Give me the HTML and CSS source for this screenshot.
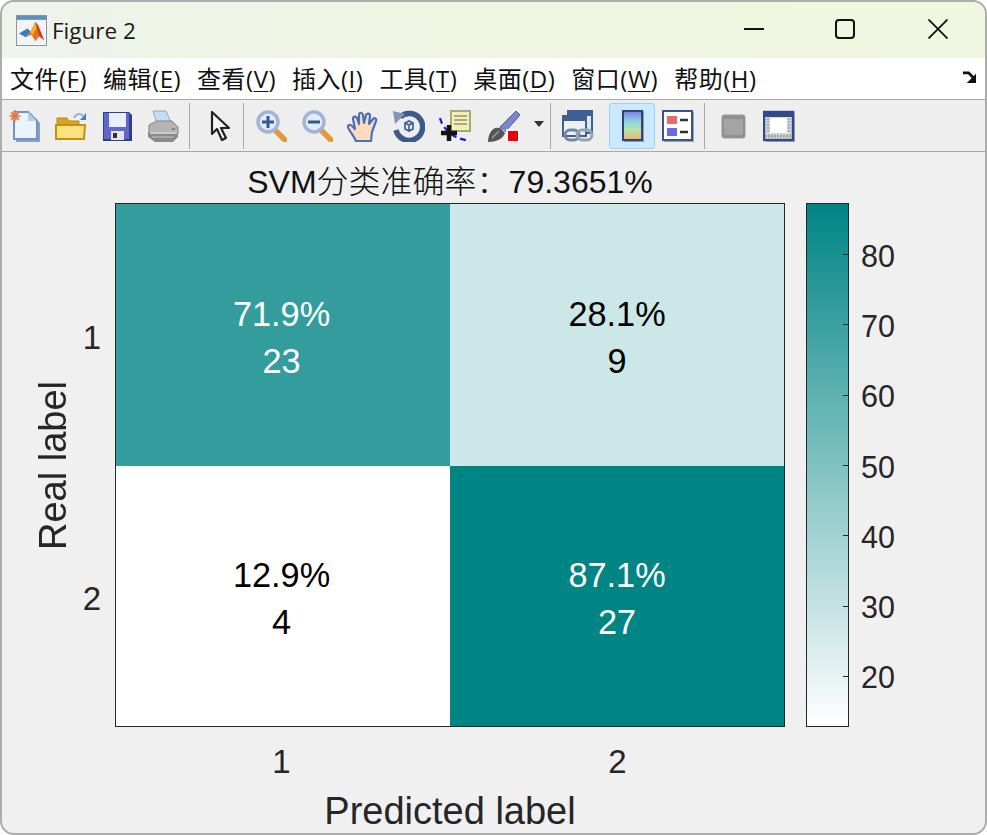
FILE: index.html
```html
<!DOCTYPE html>
<html lang="en">
<head>
  <meta charset="UTF-8">
  <title>Figure 2</title>
  <link rel="stylesheet" href="styles.css">
</head>
<body>
<div class="window">

  <!-- Title bar -->
  <div class="titlebar">
    <svg class="app-icon" viewBox="0 0 32 32">
      <rect x="0.5" y="0.5" width="31" height="31" fill="#f4f4f4" stroke="#8a94a0"/>
      <rect x="1" y="1" width="30" height="4" fill="#5b8fbf"/>
      <path d="M3 19 L12 14 L15 17 L10 23 Z" fill="#2f7fc1"/>
      <path d="M10 23 L15 17 L20 7 L23 11 L29 26 L24 22 L20 27 L16 20 Z" fill="#e2711d"/>
      <path d="M20 7 L23 11 L29 26 L24 22 L22 15 Z" fill="#c8401a"/>
      <path d="M15 17 L20 7 L21 14 L17 21 Z" fill="#f3b32c"/>
    </svg>
    <span class="win-title">Figure 2</span>
    <div class="win-btns">
      <svg class="win-btn" viewBox="0 0 20 20"><path d="M0 10H20" stroke="#111" stroke-width="2"/></svg>
      <svg class="win-btn" viewBox="0 0 20 20"><rect x="1" y="1" width="18" height="18" rx="3" fill="none" stroke="#111" stroke-width="2"/></svg>
      <svg class="win-btn win-close" viewBox="0 0 20 20"><path d="M0.5 0.5L19.5 19.5M19.5 0.5L0.5 19.5" stroke="#111" stroke-width="1.8"/></svg>
    </div>
  </div>

  <!-- Menu bar -->
  <div class="menubar">
    <span class="menu-item">文件(<u>F</u>)</span>
    <span class="menu-item">编辑(<u>E</u>)</span>
    <span class="menu-item">查看(<u>V</u>)</span>
    <span class="menu-item">插入(<u>I</u>)</span>
    <span class="menu-item">工具(<u>T</u>)</span>
    <span class="menu-item">桌面(<u>D</u>)</span>
    <span class="menu-item">窗口(<u>W</u>)</span>
    <span class="menu-item">帮助(<u>H</u>)</span>
    <svg class="dock-arrow" viewBox="0 0 16 14"><path d="M1 2H7L13 8" fill="none" stroke="#111" stroke-width="3"/><path d="M15 3V13H5Z" fill="#111"/></svg>
  </div>

  <!-- Toolbar -->
  <div class="toolbar">
    <div class="tool">
      <svg viewBox="0 0 32 32">
        <path d="M7 3H21L31 13V32H7Z" fill="#8f9cc0"/>
        <path d="M5 2H19L28 11V29H5Z" fill="#eaf4fd" stroke="#6f93c4" stroke-width="2"/>
        <path d="M19 2V11H28Z" fill="#b8cbe6"/>
        <circle cx="6" cy="6" r="4" fill="#f0a070"/>
        <path d="M6 0V12M0 6H12M2 2L10 10M10 2L2 10" stroke="#e8703a" stroke-width="1.2"/>
      </svg>
    </div>
    <div class="tool">
      <svg viewBox="0 0 32 32">
        <path d="M19 8C21 3 26 3 28 6" fill="none" stroke="#9fb0c8" stroke-width="2"/>
        <path d="M31 3V10H25Z" fill="#4f7fb5"/>
        <path d="M2 8H12L14 11H24V16H2Z" fill="#d9a520" stroke="#b98a10"/>
        <path d="M1 29V15H30L29 29Z" fill="#fce27e" stroke="#bd9216" stroke-width="2"/>
      </svg>
    </div>
    <div class="tool">
      <svg viewBox="0 0 32 32">
        <path d="M2 2H28L31 5V31H2Z" fill="#2f3f86"/>
        <path d="M3 3H28V29H3Z" fill="#5f66cc"/>
        <rect x="8" y="3" width="17" height="14" fill="#e9eefc"/>
        <rect x="10" y="21" width="13" height="9" fill="#e6e6ea"/>
        <rect x="12" y="23" width="4" height="5" fill="#333"/>
      </svg>
    </div>
    <div class="tool">
      <svg viewBox="0 0 32 32">
        <path d="M6 1H19L25 14H10Z" fill="#c5dcf2" stroke="#9aa7b5"/>
        <path d="M2 15L10 11H25L31 17V24H2Z" fill="#b4b4b4" stroke="#808080"/>
        <path d="M1 22H31V27L26 32H8L1 27Z" fill="#8a8a8a"/>
        <path d="M3 23H30" stroke="#e0e0e0" stroke-width="1.5"/>
        <path d="M5 27H27" stroke="#bdbdbd" stroke-width="1.2"/>
        <rect x="25" y="18" width="3" height="2" fill="#58a058"/>
      </svg>
    </div>
    <div class="sep sep-a"></div>
    <div class="tool">
      <svg viewBox="0 0 32 32">
        <path d="M8 2V24L13 19L18 30L22 28L17 18H25Z" fill="#f6f6f6" stroke="#222" stroke-width="2.2" stroke-linejoin="round"/>
      </svg>
    </div>
    <div class="sep sep-b"></div>
    <div class="tool">
      <svg viewBox="0 0 32 32">
        <path d="M20 20L30 30" stroke="#e09a3a" stroke-width="5.5" stroke-linecap="round"/>
        <circle cx="13" cy="12" r="10" fill="#dfeefa" stroke="#a5b1d6" stroke-width="3.4"/>
        <path d="M7 12H19M13 6V18" stroke="#35588f" stroke-width="3"/>
      </svg>
    </div>
    <div class="tool">
      <svg viewBox="0 0 32 32">
        <path d="M20 20L30 30" stroke="#e09a3a" stroke-width="5.5" stroke-linecap="round"/>
        <circle cx="13" cy="12" r="10" fill="#dfeefa" stroke="#a5b1d6" stroke-width="3.4"/>
        <path d="M7 12H19" stroke="#35588f" stroke-width="3"/>
      </svg>
    </div>
    <div class="tool">
      <svg viewBox="0 0 32 32">
        <path d="M9 31C7 26 2 21 1 17C1 14 4 14 6 17L8 19L6 9C6 6 9 6 10 8L12 14L12 5C12 2 15 2 16 5L17 13L19 5C20 3 23 3 23 6L22 14L26 9C28 7 30 9 29 11L25 22L24 31Z" fill="#fbdcbf" stroke="#4a70b8" stroke-width="2.2" stroke-linejoin="round"/>
      </svg>
    </div>
    <div class="tool">
      <svg viewBox="0 0 32 32">
        <path d="M7 7A13.5 13.5 0 1 1 3 20" fill="none" stroke="#3d5a88" stroke-width="5.5"/>
        <path d="M0 1L12 4L2 14Z" fill="#7f95b5"/>
        <circle cx="16" cy="16" r="8" fill="#e8edf3"/>
        <path d="M12 13L16 11L20 13V19L16 21L12 19ZM12 13L16 15L20 13M16 15V21" fill="none" stroke="#3c5a86" stroke-width="1.6"/>
      </svg>
    </div>
    <div class="tool">
      <svg viewBox="0 0 32 32">
        <path d="M1 8C3 17 11 24 17 27C21 29 26 30 31 31" fill="none" stroke="#1a1ae0" stroke-width="2.2" stroke-dasharray="6 4"/>
        <rect x="12" y="1" width="19" height="20" fill="#f5f0b8" stroke="#a8a878" stroke-width="2"/>
        <path d="M15 6H28M15 10H28M15 14H28" stroke="#a9a880" stroke-width="2"/>
        <path d="M10 15V31M2 23H18" stroke="#111" stroke-width="4.5"/>
      </svg>
    </div>
    <div class="tool tool-brush">
      <svg viewBox="0 0 32 32">
        <path d="M12 17L28 1L32 5L17 22Z" fill="#7c85cf" stroke="#4f5aa0"/>
        <path d="M14 20L18 24" stroke="#d8d8d8" stroke-width="2"/>
        <path d="M0 32C0 23 5 16 12 18L17 23C15 29 8 32 0 32Z" fill="#555"/>
        <path d="M4 28L11 21" stroke="#9a9a9a" stroke-width="1.5"/>
        <rect x="18" y="19" width="14" height="13" fill="#fff"/>
        <rect x="20" y="21" width="10" height="10" fill="#f00000"/>
      </svg>
    </div>
    <div class="tool-drop"></div>
    <div class="sep sep-c"></div>
    <div class="tool">
      <svg viewBox="0 0 32 32">
        <rect x="6" y="1" width="24" height="22" fill="#dfe7f2" stroke="#3f5f93" stroke-width="2"/>
        <rect x="6" y="1" width="24" height="5" fill="#3f5f93"/>
        <rect x="1" y="6" width="23" height="20" fill="#eef2f8" stroke="#3f5f93" stroke-width="2"/>
        <rect x="1" y="6" width="23" height="5" fill="#3f5f93"/>
        <rect x="3" y="20" width="14" height="10" rx="5" fill="none" stroke="#71879f" stroke-width="3"/>
        <rect x="15" y="20" width="15" height="10" rx="5" fill="none" stroke="#8fa3b8" stroke-width="3"/>
      </svg>
    </div>
    <div class="tool tool-on">
      <svg viewBox="0 0 32 32">
        <defs>
          <linearGradient id="cbarIcon" x1="0" y1="0" x2="0" y2="1">
            <stop offset="0" stop-color="#7d80d8"/>
            <stop offset="0.35" stop-color="#8fcfe8"/>
            <stop offset="0.65" stop-color="#b8e6a8"/>
            <stop offset="1" stop-color="#f2b070"/>
          </linearGradient>
        </defs>
        <rect x="8" y="1" width="20" height="31" fill="#8a9ab0"/>
        <rect x="7" y="1" width="19" height="29" fill="url(#cbarIcon)" stroke="#2f4578" stroke-width="2"/>
      </svg>
    </div>
    <div class="tool">
      <svg viewBox="0 0 32 32">
        <rect x="2" y="2" width="30" height="31" fill="#9aa6bc"/>
        <rect x="1" y="1" width="29" height="29" fill="#fff" stroke="#3a5488" stroke-width="2"/>
        <rect x="5" y="6" width="10" height="8" fill="#e96a6a"/>
        <rect x="5" y="18" width="10" height="8" fill="#6a6ae9"/>
        <path d="M18 10H26M18 22H26" stroke="#333" stroke-width="2.4"/>
      </svg>
    </div>
    <div class="sep sep-d"></div>
    <div class="tool">
      <svg viewBox="0 0 32 32">
        <rect x="5" y="5" width="23" height="23" rx="2" fill="#8f8f8f" stroke="#999"/>
        <rect x="7" y="9" width="19" height="16" fill="#a4a4a4"/>
      </svg>
    </div>
    <div class="tool">
      <svg viewBox="0 0 32 32">
        <rect x="3" y="3" width="30" height="29" fill="#a4adbd"/>
        <rect x="1" y="2" width="29" height="28" fill="#d6dbe2" stroke="#31498a" stroke-width="2.4"/>
        <rect x="1" y="2" width="29" height="5" fill="#31498a"/>
        <rect x="7" y="8" width="17" height="15" fill="#fff"/>
        <path d="M2 26H29" stroke="#a0a888" stroke-width="3" stroke-dasharray="2 1"/>
        <path d="M5 8V23M26 8V23" stroke="#aeb3ba" stroke-width="3" stroke-dasharray="2 1"/>
      </svg>
    </div>
  </div>

  <!-- Figure canvas -->
  <div class="figure">
    <div class="plot-title">SVM分类准确率：79.3651%</div>

    <div class="ylabel"><span>Real label</span></div>
    <div class="yticks">
      <span>1</span>
      <span>2</span>
    </div>
    <div class="matrix">
      <div class="cell c-72"><span>71.9%</span><span>23</span></div>
      <div class="cell c-28"><span>28.1%</span><span>9</span></div>
      <div class="cell c-13"><span>12.9%</span><span>4</span></div>
      <div class="cell c-87"><span>87.1%</span><span>27</span></div>
    </div>
    <div class="colorbar"></div>
    <div class="cbar-ticks">
      <div class="cbar-tick">80</div>
      <div class="cbar-tick">70</div>
      <div class="cbar-tick">60</div>
      <div class="cbar-tick">50</div>
      <div class="cbar-tick">40</div>
      <div class="cbar-tick">30</div>
      <div class="cbar-tick">20</div>
    </div>

    <div class="xticks">
      <span>1</span>
      <span>2</span>
    </div>
    <div class="xlabel">Predicted label</div>
  </div>
</div>
</body>
</html>
```

FILE: styles.css
```css
/* Window shell */
html, body {
  margin: 0;
  padding: 0;
  background: #fff;
}
.window {
  width: 987px;
  height: 835px;
  box-sizing: border-box;
  border: 2px solid #adadad;
  border-radius: 14px;
  overflow: hidden;
  display: flex;
  flex-direction: column;
  background: #f0f0f0;
  font-family: "Liberation Sans", "Noto Sans CJK SC", sans-serif;
}

/* Title bar */
.titlebar {
  height: 56px;
  flex: none;
  display: flex;
  align-items: center;
  padding-left: 14px;
  background: linear-gradient(90deg, #eef3ec 0%, #f0f5e2 45%, #f1f6e0 100%);
}
.app-icon {
  width: 31px;
  height: 31px;
}
.win-title {
  margin-left: 5px;
  font-family: "Open Sans", sans-serif;
  font-size: 22.5px;
  color: #1a1a1a;
}
.win-btns {
  margin-left: auto;
  margin-bottom: 2px;
  display: flex;
  gap: 71px;
  padding-right: 37px;
}
.win-btn {
  width: 20px;
  height: 20px;
}
.win-close {
  margin-left: 2px;
}

/* Menu bar */
.menubar {
  height: 42px;
  flex: none;
  box-sizing: border-box;
  display: flex;
  align-items: center;
  gap: 16px;
  padding: 0 8px 2px;
  background: #fff;
  border-bottom: 1px solid #a8a8a8;
  font-family: "Open Sans", "Noto Sans CJK SC", sans-serif;
  font-size: 24px;
  letter-spacing: 0.5px;
  color: #111;
}
.menu-item u {
  text-underline-offset: 3px;
  text-decoration-thickness: 1px;
}
.dock-arrow {
  width: 15px;
  height: 13px;
  margin-left: auto;
}

/* Toolbar */
.toolbar {
  height: 52px;
  flex: none;
  box-sizing: border-box;
  display: flex;
  align-items: stretch;
  padding: 3px 0 2px;
  background: #eeeeee;
  border-bottom: 1px solid #a8a8a8;
}
.tool {
  width: 46px;
  flex: none;
  display: flex;
  align-items: center;
  justify-content: center;
  box-sizing: border-box;
  border: 1px solid transparent;
  border-radius: 3px;
}
.tool svg {
  width: 32px;
  height: 32px;
  filter: blur(0.5px);
}
.tool-brush {
  margin-left: 3px;
}
.tool-on {
  margin-left: 8px;
  background: #cce8ff;
  border-color: #99d1ff;
}
.tool-drop {
  width: 0;
  height: 0;
  flex: none;
  align-self: center;
  margin: 0 5px 4px 7px;
  border-left: 5px solid transparent;
  border-right: 5px solid transparent;
  border-top: 6px solid #333;
}
.sep {
  width: 1px;
  flex: none;
  background: #a8a8a8;
}
.sep-a { margin: 0 7px 0 3px; }
.sep-b { margin: 0 4px 0 0; }
.sep-c { margin: 0 4px 0 1px; }
.sep-d { margin: 0 5px 0 3px; }

/* Figure canvas */
.figure {
  flex: 1;
  display: grid;
  grid-template-columns: 46px 39px 670px 21px 43px 1fr;
  grid-template-rows: 51px 524px 64px 1fr;
  padding-left: 28px;
  color: #262626;
}
.plot-title {
  grid-column: 3;
  grid-row: 1;
  align-self: end;
  padding-bottom: 1px;
  text-align: center;
  white-space: nowrap;
  font-size: 32px;
  line-height: 40px;
  font-weight: 300;
  color: #111;
}
.ylabel {
  grid-column: 1;
  grid-row: 2;
  display: flex;
  align-items: center;
  justify-content: center;
  font-size: 38px;
}
.ylabel span {
  writing-mode: vertical-rl;
  transform: rotate(180deg);
  white-space: nowrap;
}
.yticks {
  grid-column: 2;
  grid-row: 2;
  display: grid;
  grid-template-rows: 262px 260px;
  justify-items: end;
  align-items: center;
  padding: 4px 14px 0 0;
  font-size: 33px;
}
.matrix {
  grid-column: 3;
  grid-row: 2;
  display: grid;
  grid-template-columns: 334px 334px;
  grid-template-rows: 262px 260px;
  box-sizing: border-box;
  border: 1px solid #262626;
}
.cell {
  display: flex;
  flex-direction: column;
  align-items: center;
  justify-content: center;
  padding-top: 6px;
  font-size: 34.3px;
  line-height: 47px;
}
.c-72 { background: #339d9d; color: #fff; padding-right: 3px; }
.c-28 { background: #cce7e7; color: #000; }
.c-13 { background: #fff; color: #000; padding-right: 3px; }
.c-87 { background: #008484; color: #fff; }

.colorbar {
  grid-column: 5;
  grid-row: 2;
  box-sizing: border-box;
  border: 1px solid #262626;
  background: linear-gradient(180deg, #008484 0%, #ffffff 100%);
}
.cbar-ticks {
  grid-column: 6;
  grid-row: 2;
  display: grid;
  grid-auto-rows: 70.3px;
  padding-top: 16px;
  font-size: 30.5px;
}
.cbar-tick {
  position: relative;
  display: flex;
  align-items: center;
  padding: 4px 0 0 12px;
}
.cbar-tick::before {
  content: "";
  position: absolute;
  left: -6px;
  top: 50%;
  width: 6px;
  height: 1px;
  background: #262626;
}
.xticks {
  grid-column: 3;
  grid-row: 3;
  display: grid;
  grid-template-columns: 335px 335px;
  justify-items: center;
  align-items: center;
  font-size: 33px;
  padding-top: 6px;
}
.xticks span:first-child {
  margin-right: 2px;
}
.xlabel {
  grid-column: 3;
  grid-row: 4;
  padding-top: 2px;
  text-align: center;
  font-size: 38px;
  line-height: 36px;
}
```
